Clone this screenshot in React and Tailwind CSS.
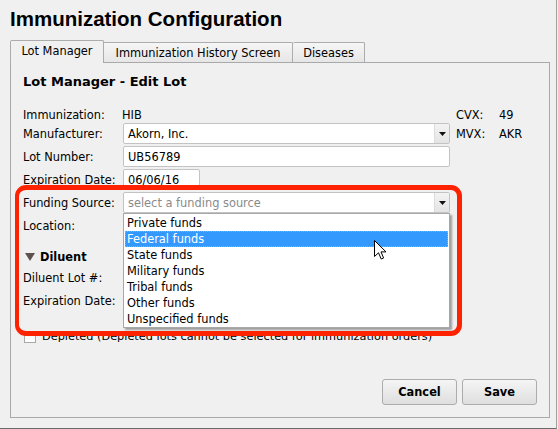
import React from "react";

function Arrow() {
  return (
    <svg width="7" height="4" viewBox="0 0 7 4">
      <polygon points="0,0 7,0 3.5,4" fill="#111" />
    </svg>
  );
}

function Input({ w, children, placeholder }) {
  return (
    <div
      className={`h-[21px] ${w} border border-[#c3c3c3] rounded-[2px] bg-white flex items-center pl-[4px] overflow-hidden`}
    >
      <span className={placeholder ? "text-[#8a8a8a]" : "text-black"}>{children}</span>
    </div>
  );
}

function Select({ children, placeholder, extra }) {
  return (
    <div className="relative h-[21px] w-[327px] border border-[#c3c3c3] rounded-[2px] bg-white flex items-center">
      <span className={`flex-1 pl-[4px] ${placeholder ? "text-[#8a8a8a]" : "text-black"}`}>{children}</span>
      <div className="w-[15px] h-full border-l border-[#dcdcdc] bg-gradient-to-b from-[#f3f3f3] to-[#e4e4e4] flex items-center justify-center">
        <Arrow />
      </div>
      {extra}
    </div>
  );
}

const items = [
  "Private funds",
  "Federal funds",
  "State funds",
  "Military funds",
  "Tribal funds",
  "Other funds",
  "Unspecified funds",
];

function Dropdown() {
  return (
    <div className="absolute left-[-1px] top-[20px] w-[327px] z-20 bg-white border border-[#a8a8a8] pt-px shadow-[2px_2px_2px_rgba(0,0,0,0.35)]">
      {items.map((t) =>
        t === "Federal funds" ? (
          <div
            key={t}
            className="h-[16px] mx-px pl-[2px] flex items-center bg-[#3399ff] text-white border border-dotted border-[#d8a070]"
          >
            <span className="-ml-px">{t}</span>
          </div>
        ) : (
          <div key={t} className="h-[16px] mx-px pl-[2px] flex items-center text-black">
            {t}
          </div>
        )
      )}
    </div>
  );
}

function Row({ label, children, h = "h-[21px]", mt = "mt-[2px]" }) {
  return (
    <div className={`flex items-center ${h} ${mt}`}>
      <div className="w-[100px] shrink-0 pt-px">{label}</div>
      {children}
    </div>
  );
}

function Cursor() {
  return (
    <svg
      className="absolute left-[363px] top-[177px] z-30"
      width="14"
      height="21"
      viewBox="0 0 14 21"
    >
      <path
        d="M0.5 0.5 L0.5 16.5 L4.5 12.8 L7.2 19 L9.6 18 L7 11.9 L12 11.9 Z"
        fill="#fff"
        stroke="#000"
        strokeWidth="1"
        strokeLinejoin="miter"
      />
    </svg>
  );
}

export default function App() {
  return (
    <div className="w-[558px] h-[429px] bg-[#f0f0f0] overflow-hidden font-['DejaVu_Sans',sans-serif] text-[11.4px] leading-[16px] text-black">
      <div className="w-[557px] h-[429px] border-r border-b border-r-[#a0a0a0] border-b-[#6a6a6a] flex flex-col">
        <div className="mt-[7px] pl-[10px] font-['Liberation_Sans',Arial,sans-serif] font-bold text-[20.5px] leading-[23px] text-black">
          Immunization Configuration
        </div>

        <div className="mt-[10px] ml-[10px] flex items-end h-[23px] -mb-px relative z-10">
          <div className="w-[94px] h-[23px] border border-b-0 border-[#acacac] bg-[#f0f0f0] rounded-t-[2px] flex items-center justify-center pb-[2px]">
            Lot Manager
          </div>
          <div className="w-[189px] h-[20px] mb-px border-t border-r border-[#acacac] bg-gradient-to-b from-[#f6f6f6] to-[#e6e6e6] rounded-tr-[2px] flex items-center justify-center">
            Immunization History Screen
          </div>
          <div className="w-[72px] h-[20px] mb-px border-t border-r border-[#acacac] bg-gradient-to-b from-[#f6f6f6] to-[#e6e6e6] rounded-t-[2px] flex items-center justify-center">
            Diseases
          </div>
        </div>

        <div className="ml-[10px] w-[540px] h-[356px] border border-[#a9a9a9] bg-[#f0f0f0] relative flex flex-col pl-[12px] pt-[11px]">
          <div className="font-bold text-[13px] leading-[16px]">Lot Manager - Edit Lot</div>

          <div className="flex items-center h-[16px] mt-[17px]">
            <div className="w-[99px] shrink-0">Immunization:</div>
            <div className="w-[334px]">HIB</div>
            <div className="w-[43px]">CVX:</div>
            <div>49</div>
          </div>

          <Row label="Manufacturer:" mt="mt-0">
            <Select>Akorn, Inc.</Select>
            <div className="w-[43px] ml-[6px]">MVX:</div>
            <div>AKR</div>
          </Row>

          <Row label="Lot Number:">
            <Input w="w-[327px]">UB56789</Input>
          </Row>

          <Row label="Expiration Date:">
            <Input w="w-[77px]">06/06/16</Input>
          </Row>

          <div className="flex items-center h-[21px] mt-[2px] relative z-20">
            <div className="w-[100px] shrink-0 pt-px">Funding Source:</div>
            <Select placeholder extra={<Dropdown />}>
              select a funding source
            </Select>
          </div>

          <Row label="Location:">
            <div />
          </Row>

          <div className="flex items-center h-[16px] mt-[13px] pl-[2px] gap-[5px]">
            <svg width="10" height="8" viewBox="0 0 10 8">
              <polygon points="0,0 10,0 5,8" fill="#5e524e" />
            </svg>
            <span className="font-bold">Diluent</span>
          </div>

          <Row label="Diluent Lot #:">
            <div />
          </Row>

          <Row label="Expiration Date:">
            <div />
          </Row>

          <div className="flex items-center h-[16px] mt-[18px] pl-px gap-[6px]">
            <div className="w-[12px] h-[12px] border border-[#a8a8a8] bg-gradient-to-b from-[#f4f4f4] to-white" />
            <span className="text-[11.3px]">Depleted (Depleted lots cannot be selected for immunization orders)</span>
          </div>

          <div className="flex-1" />

          <div className="flex justify-end gap-[5px] pr-[12px] pb-[12px]">
            <button className="w-[75px] h-[26px] border border-[#acacac] rounded-[3px] bg-gradient-to-b from-[#f5f5f5] to-[#dedede] font-bold text-[11.4px]">
              Cancel
            </button>
            <button className="w-[75px] h-[26px] border border-[#acacac] rounded-[3px] bg-gradient-to-b from-[#f5f5f5] to-[#dedede] font-bold text-[11.4px]">
              Save
            </button>
          </div>

          <div className="absolute left-[4px] top-[122px] w-[447px] h-[151px] border-[5px] border-l-[4px] border-[#ff2200] rounded-[11px] z-30 pointer-events-none" />
          <Cursor />
        </div>
      </div>
    </div>
  );
}
